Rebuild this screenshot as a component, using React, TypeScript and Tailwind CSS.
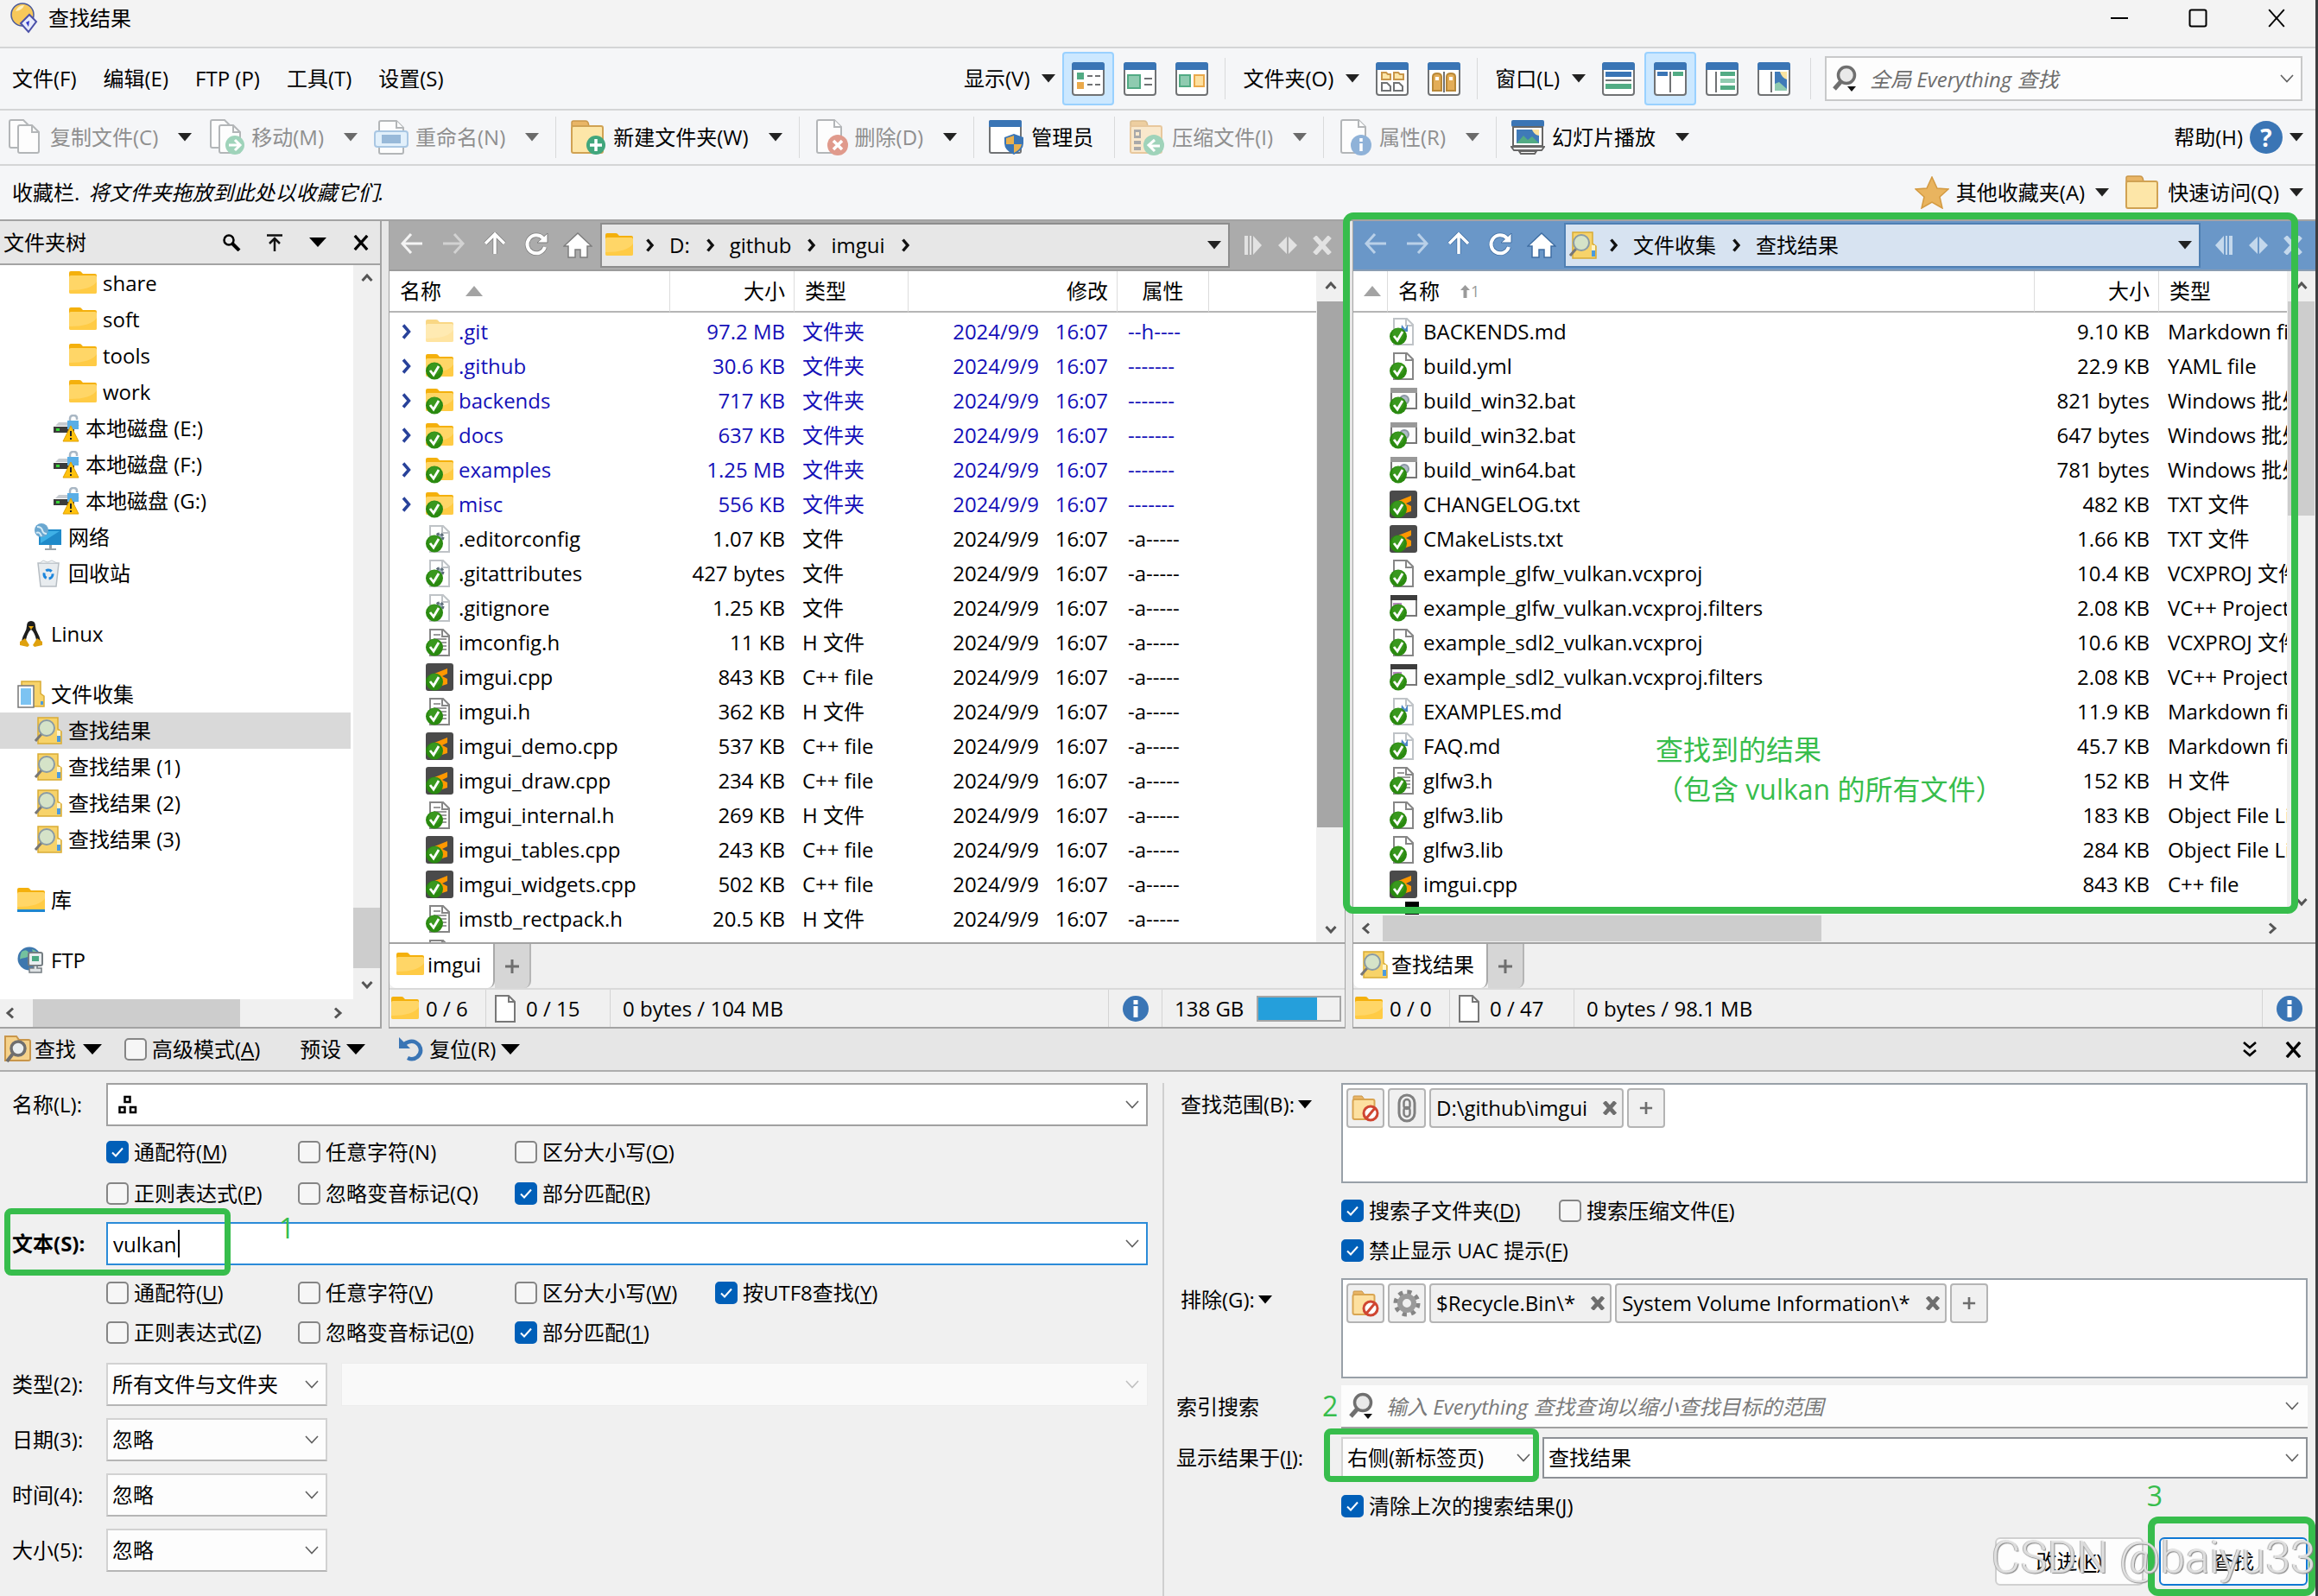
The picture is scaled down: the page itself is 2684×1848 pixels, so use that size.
import type { ReactNode } from 'react';

interface FileRow {
  icon: ReactNode;
  name: string;
  size: string;
  type: string;
  attr?: string;
  dir?: boolean;
}

/* ---------- text ---------- */

// "&X" marks an underlined mnemonic, as in Windows resource strings.
function Txt({ children }: { children: string }) {
  const at = children.indexOf('&');
  if (at < 0) return <span className="whitespace-pre">{children}</span>;
  return (
    <span className="whitespace-pre">
      {children.slice(0, at)}
      <span className="underline underline-offset-2">{children[at + 1]}</span>
      {children.slice(at + 2)}
    </span>
  );
}

/* ---------- small glyphs ---------- */

function Caret({ className = 'text-[#222]' }: { className?: string }) {
  return (
    <svg width="16" height="10" viewBox="0 0 16 10" className={`shrink-0 ${className}`}>
      <path d="M0 0h16L8 9.5z" fill="currentColor" />
    </svg>
  );
}

function BigCaret() {
  return (
    <svg width="22" height="14" viewBox="0 0 22 14" className="shrink-0">
      <path d="M0 1h22L11 13z" fill="#000" />
    </svg>
  );
}

function ThinChevron({ className = 'text-[#606060]' }: { className?: string }) {
  return (
    <svg width="16" height="10" viewBox="0 0 16 10" className={className}>
      <path d="M1 1l7 7.5L15 1" fill="none" stroke="currentColor" strokeWidth="1.6" />
    </svg>
  );
}

const ROTATE = { up: 0, right: 90, down: 180, left: 270 };

function ScrollArrow({ dir }: { dir: keyof typeof ROTATE }) {
  return (
    <svg width="14" height="14" viewBox="0 0 14 14" className="shrink-0">
      <g transform={`rotate(${ROTATE[dir]} 7 7)`}>
        <path d="M1.5 10L7 4l5.5 6" fill="none" stroke="#555" strokeWidth="3" />
      </g>
    </svg>
  );
}

function Cross({ size, stroke, className }: { size: number; stroke: number; className?: string }) {
  return (
    <svg width={size} height={size} viewBox="0 0 20 20" className={className}>
      <path d="M2 1l16 18M18 1L2 19" fill="none" stroke="currentColor" strokeWidth={stroke} />
    </svg>
  );
}

function CrumbArrow() {
  return (
    <svg width="12" height="16" viewBox="0 0 12 16">
      <path d="M2.5 1.5l5.5 6.5-5.5 6.5" fill="none" stroke="#111" strokeWidth="3.4" />
    </svg>
  );
}

function Plus({ size = 18 }: { size?: number }) {
  return (
    <svg width={size} height={size} viewBox="0 0 18 18">
      <path d="M9 1v16M1 9h16" stroke="#6e6e6e" strokeWidth="3" />
    </svg>
  );
}

/* ---------- toolbar icons ---------- */

function Frame({ children }: { children: ReactNode }) {
  return (
    <svg width="38" height="39" viewBox="0 0 38 39">
      <rect x="1" y="1" width="36" height="37" rx="3" fill="#fff" stroke="#707274" strokeWidth="2" />
      <path d="M0 9V3q0-3 3-3h32q3 0 3 3v6z" fill="#3a75b5" />
      {children}
    </svg>
  );
}

const sheet = (x: number, y: number, w = 24, h = 32) =>
  `M${x} ${y + 2}q0-2 2-2h${w - 10}l8 8v${h - 10}q0 2-2 2h${4 - w}q-2 0-2-2z`;
const fold = (x: number, y: number, w = 24) => `M${x + w - 8} ${y}v8h8`;

function CopyIcon({ move = false }: { move?: boolean }) {
  return (
    <svg width="42" height="42" viewBox="0 0 42 42" fill="#fdfdfd" stroke="#b3b6b8" strokeWidth="2">
      <path d={sheet(3, 1)} />
      <path d={sheet(13, 7)} />
      <path d={fold(13, 7)} fill="none" />
      {move && (
        <>
          <circle cx="31" cy="30" r="11" fill="#9fd3ba" stroke="none" />
          <path d="M24 30h12M31 24l6 6-6 6" fill="none" stroke="#fff" strokeWidth="3" />
        </>
      )}
    </svg>
  );
}

function RenameIcon() {
  return (
    <svg width="40" height="40" viewBox="0 0 40 40">
      <g fill="#fdfdfd" stroke="#b3b6b8" strokeWidth="2">
        <path d={sheet(6, 1, 28, 38)} />
        <path d={fold(6, 1, 28)} />
      </g>
      <rect x="1" y="13" width="38" height="18" rx="3" fill="#e2f0fb" stroke="#a9c7e3" strokeWidth="2" />
      <rect x="9" y="17" width="22" height="10" fill="#98b9d9" />
    </svg>
  );
}

function FlatFolder({ children }: { children?: ReactNode }) {
  return (
    <svg width="42" height="42" viewBox="0 0 42 42" className="shrink-0">
      <path d="M2 8V4q0-2 2-2h14q2 0 3 2l1 4z" fill="#e9b566" stroke="#c9964a" strokeWidth="1.5" />
      <rect x="2" y="8" width="36" height="31" rx="2" fill="#fde6a8" stroke="#d0a253" strokeWidth="2" />
      {children}
    </svg>
  );
}

function NewFolderIcon() {
  return (
    <FlatFolder>
      <circle cx="30" cy="30" r="11" fill="#41a67c" />
      <path d="M30 23v14M23 30h14" stroke="#fff" strokeWidth="3.5" />
    </FlatFolder>
  );
}

function DeleteIcon() {
  return (
    <svg width="40" height="42" viewBox="0 0 40 42">
      <g fill="#fdfdfd" stroke="#b3b6b8" strokeWidth="2">
        <path d={sheet(4, 1, 28, 38)} />
        <path d={fold(4, 1, 28)} />
      </g>
      <circle cx="28" cy="30" r="12" fill="#e09a8c" />
      <path d="M23 25l10 10M33 25L23 35" stroke="#fff" strokeWidth="3.5" />
    </svg>
  );
}

function AdminIcon() {
  return (
    <svg width="42" height="42" viewBox="0 0 42 42">
      <rect x="2" y="2" width="36" height="37" rx="2" fill="#fff" stroke="#707274" strokeWidth="2" />
      <path d="M1 9V3q0-2 2-2h34q2 0 2 2v6z" fill="#3a75b5" />
      <path d="M30 17l11 4v7q0 8-11 13-11-5-11-13v-7z" fill="#3a75b5" />
      <path d="M30 19v10H21v-7zM30 29h9q-1 6-9 10z" fill="#e9b04e" />
    </svg>
  );
}

function ArchiveIcon() {
  return (
    <svg width="42" height="42" viewBox="0 0 42 42">
      <g opacity="0.6">
        <path d="M2 8V4q0-2 2-2h14q2 0 3 2l1 4z" fill="#e9b566" stroke="#c9964a" strokeWidth="1.5" />
        <rect x="2" y="8" width="36" height="31" rx="2" fill="#fde0b0" stroke="#e0aa62" strokeWidth="2" />
        <path d="M6 12h8v10H6zM6 25h8v4H6zM6 32h8v4H6z" fill="#777" />
        <path d="M8 15h4v4H8z" fill="#fde0b0" />
      </g>
      <circle cx="29" cy="30" r="12" fill="#9fd3ba" />
      <path d="M36 31H24M30 24l-7 6 7 7" fill="none" stroke="#fff" strokeWidth="3" />
    </svg>
  );
}

function PropsIcon() {
  return (
    <svg width="40" height="42" viewBox="0 0 40 42">
      <g fill="#fdfdfd" stroke="#b3b6b8" strokeWidth="2">
        <path d={sheet(4, 1, 28, 38)} />
        <path d={fold(4, 1, 28)} />
      </g>
      <circle cx="27" cy="30" r="12" fill="#8fb2d8" />
      <path d="M27 22v4M27 28v9" stroke="#fff" strokeWidth="3.5" />
    </svg>
  );
}

function SlideIcon() {
  return (
    <svg width="40" height="42" viewBox="0 0 40 42">
      <rect x="1" y="1" width="38" height="8" rx="2" fill="#3a75b5" />
      <path d="M3 9h34v22H3z" fill="#fff" stroke="#666" strokeWidth="2" />
      <path d="M7 12h26v16H7z" fill="#3f7ab8" />
      <path d="M7 28l8-9 5 5 5-4 8 8z" fill="#52ab84" />
      <path d="M25 12h8v7q-6-1-8-7z" fill="#fbe3a0" />
      <path d="M1 32h38l-3 4H4zM10 37h20l-2 3H12z" fill="#fff" stroke="#666" strokeWidth="2" />
    </svg>
  );
}

function HelpIcon() {
  return (
    <span className="flex size-[38px] items-center justify-center rounded-full bg-[#3a75b5] text-[28px] font-bold text-white">
      ?
    </span>
  );
}

function SearchGlass({ size = 32 }: { size?: number }) {
  return (
    <svg width={size} height={size} viewBox="0 0 32 32" className="shrink-0">
      <circle cx="17" cy="12" r="9.5" fill="#e9e9e9" stroke="#6f6f6f" strokeWidth="3.5" />
      <path d="M11 19L3 28" stroke="#6f6f6f" strokeWidth="5" />
      <path d="M18 25h10l-5 6z" fill="#111" />
    </svg>
  );
}

/* ---------- file icons ---------- */

function FolderIcon({ badge = false, faded = false, library = false }: { badge?: boolean; faded?: boolean; library?: boolean }) {
  return (
    <svg width="32" height="32" viewBox="0 0 32 32" className="shrink-0">
      <g opacity={faded ? 0.5 : 1}>
        <path d="M0 12V4q0-2 2-2h10q2 0 3 2l1 1h14q2 0 2 2v5z" fill="#f4b00c" />
        <path d="M0 9q0-2 2-2h28q2 0 2 2v17q0 2-2 2H2q-2 0-2-2z" fill="#ffd667" />
        <path d="M0 26q0 2 2 2h28q2 0 2-2V14q-6 10-32 10z" fill="#ffcb45" />
      </g>
      {library && <path d="M0 27h32v3H0z" fill="#1f86cf" />}
      {badge && <Badge />}
    </svg>
  );
}

function Badge() {
  return (
    <g>
      <circle cx="10" cy="21.5" r="10" fill="#2a8a10" />
      <circle cx="10" cy="19" r="7" fill="#48a52c" opacity="0.5" />
      <path d="M5 21l4 5 6-10" fill="none" stroke="#fff" strokeWidth="2.8" />
    </g>
  );
}

type DocKind = 'plain' | 'text' | 'md' | 'gear' | 'bat' | 'filters' | 'code';

function DocIcon({ kind = 'plain' }: { kind?: DocKind }) {
  const page = kind === 'md' || kind === 'gear' ? '#bfc3c7' : '#868686';
  return (
    <svg width="32" height="32" viewBox="0 0 32 32" className="shrink-0">
      {kind === 'code' ? (
        <>
          <rect width="32" height="32" rx="3" fill="#4a4a4a" />
          <path d="M10 12l15-6v6l-6 3 6 3v6l-15 5v-5l8-4-8-4z" fill="#ff9800" />
        </>
      ) : kind === 'bat' || kind === 'filters' ? (
        <>
          <rect x="2" y="2" width="29" height="23" fill="#fcfcfc" stroke="#777" strokeWidth="2" />
          <path d="M1 1h31v6H1z" fill={kind === 'filters' ? '#3d3d3d' : '#999'} />
          {kind === 'bat' && <circle cx="17" cy="15" r="5" fill="#aebac6" stroke="#8a96a2" strokeWidth="2" />}
          {kind === 'filters' && <path d="M4 10h10v8H4z" fill="#b88ac0" />}
        </>
      ) : (
        <>
          <path d="M5 1h15l7 7v23H5z" fill="#fff" stroke={page} strokeWidth="2" />
          <path d="M19 1v8h8" fill="none" stroke={page} strokeWidth="2" />
          {kind === 'text' && <path d="M9 7h8M9 12h15M9 16h15M9 20h15M9 24h15" stroke="#9a9a9a" strokeWidth="2" />}
          {kind === 'md' && <path d="M14 8l4 5 3-5v8h-8z" fill="#4d86c4" />}
          {kind === 'gear' && <circle cx="16" cy="14" r="4" fill="#9fb0bd" stroke="#5c6c78" strokeWidth="3" strokeDasharray="3 2" />}
        </>
      )}
      <Badge />
    </svg>
  );
}

function SearchFolder() {
  return (
    <svg width="32" height="32" viewBox="0 0 32 32" className="shrink-0">
      <path d="M4 1h23v13l4 3v14H4z" fill="#f7d36a" stroke="#d9ac35" strokeWidth="1.5" />
      <path d="M26 22h4v7h-4z" fill="#4a9be0" />
      <path d="M26 16h4v6h-4z" fill="#fff3c8" />
      <path d="M8 20L1 28" stroke="#777" strokeWidth="3" />
      <circle cx="14" cy="13" r="9" fill="#cfe5d8" fillOpacity="0.85" stroke="#8a9ba5" strokeWidth="2" />
    </svg>
  );
}

function DriveIcon() {
  return (
    <svg width="32" height="32" viewBox="0 0 32 32" className="shrink-0">
      <path d="M4 13l4-4h20l4 4z" fill="#c7cbd0" />
      <path d="M2 14h24v7H2z" fill="#3b3b3b" />
      <path d="M5 16h4v3H5z" fill="#39d639" />
      <path d="M21 8V5q0-4 4-4t4 3v2" fill="none" stroke="#a9b7c4" strokeWidth="2.5" />
      <path d="M18 7h13v10H18z" fill="#5aaee6" />
      <path d="M22 13l9 18H13z" fill="#ffc20e" stroke="#e0a000" />
      <path d="M22 19v6M22 27v2" stroke="#222" strokeWidth="2" />
    </svg>
  );
}

function NetworkIcon() {
  return (
    <svg width="32" height="32" viewBox="0 0 32 32" className="shrink-0">
      <path d="M5 7h26v18H5z" fill="#1f8ac9" />
      <path d="M7 9h22L7 23z" fill="#3fb0e6" />
      <path d="M17 25h3v4h5v2H12v-2h5z" fill="#9aa4ab" />
      <circle cx="8" cy="8" r="8" fill="#6aa7d0" />
      <path d="M3 4q5 0 6 4t5 4M2 11q4-2 6 4" fill="none" stroke="#d6ebf5" strokeWidth="2" />
    </svg>
  );
}

function BinIcon() {
  return (
    <svg width="32" height="32" viewBox="0 0 32 32" className="shrink-0">
      <path d="M4 4h24l-3 27H7z" fill="#e8ecef" stroke="#b6bdc3" strokeWidth="1.5" />
      <path d="M6 4l4-3 5 2 5-2 6 3z" fill="#f6f8fa" stroke="#c2c8cd" />
      <circle cx="16" cy="17" r="5" fill="none" stroke="#1c86dd" strokeWidth="3" strokeDasharray="7 3" />
    </svg>
  );
}

function TuxIcon() {
  return (
    <svg width="32" height="32" viewBox="0 0 32 32" className="shrink-0">
      <path d="M11 7q0-6 5-6t5 6q0 4 3 9 4 7 2 12H6q-2-5 2-12 3-5 3-9z" fill="#1d1d1d" />
      <path d="M16 11q3 2 5 8t0 10H11q-2-4 0-10t5-8z" fill="#fff" />
      <path d="M13 7h6l-3 4z" fill="#e8a90c" />
      <path d="M3 25l6-4 5 8-2 2-9-2zM29 25l-6-4-5 8 2 2 9-2z" fill="#dfa10e" />
    </svg>
  );
}

function CollectionIcon() {
  return (
    <svg width="32" height="32" viewBox="0 0 32 32" className="shrink-0">
      <path d="M5 1h22v14l4 3v12H5z" fill="#f7d36a" stroke="#d9ac35" strokeWidth="1.5" />
      <path d="M27 24h3v4h-3z" fill="#4a9be0" />
      <path d="M1 6h18v25H1z" fill="#fff" stroke="#777" strokeWidth="1.5" />
      <path d="M4 9h12v19H4z" fill="#7cc3f2" />
    </svg>
  );
}

function FtpIcon() {
  return (
    <svg width="32" height="32" viewBox="0 0 32 32" className="shrink-0">
      <circle cx="14" cy="14" r="13.5" fill="#3d77ae" />
      <path d="M5 6q6-4 8 1t-4 6-6 2q0-5 2-9zM17 3q6 2 8 6l-6 1z" fill="#74c29e" />
      <rect x="13" y="7" width="16" height="15" rx="2" fill="#e9eef0" stroke="#757d82" strokeWidth="2" />
      <path d="M17 11h8v6h-8z" fill="#4aa883" />
      <path d="M19 22h4v3h5v5H14v-5h5z" fill="#dfe3e5" stroke="#757d82" strokeWidth="1.5" />
    </svg>
  );
}

function InfoIcon() {
  return (
    <svg width="30" height="30" viewBox="0 0 30 30" className="shrink-0">
      <circle cx="15" cy="15" r="15" fill="#3a75b5" />
      <path d="M15 5v5M15 12v13" stroke="#fff" strokeWidth="5" />
    </svg>
  );
}

function BlankPage() {
  return (
    <svg width="24" height="32" viewBox="0 0 24 32" className="shrink-0">
      <path d="M1 1h15l7 7v23H1z" fill="#fff" stroke="#777" strokeWidth="2" />
      <path d="M16 1v7h7" fill="none" stroke="#777" strokeWidth="2" />
    </svg>
  );
}

function BlockedFolder() {
  return (
    <svg width="32" height="32" viewBox="0 0 32 32">
      <path d="M2 6V3q0-1 1-1h9l3 4z" fill="#e9b566" stroke="#c9964a" />
      <rect x="1.5" y="6" width="25" height="23" rx="2" fill="#fde0a0" stroke="#d9a552" strokeWidth="2" />
      <circle cx="22" cy="22" r="8" fill="#fff" stroke="#cf4632" strokeWidth="3" />
      <path d="M27 16L17 28" stroke="#cf4632" strokeWidth="3" />
    </svg>
  );
}

/* ---------- top bars ---------- */

function ToolItem({ icon, text, off, caret = true, darkCaret, last }: { icon: ReactNode; text: string; off?: boolean; caret?: boolean; darkCaret?: boolean; last?: boolean }) {
  return (
    <>
      <button type="button" className={`flex items-center gap-2 ${off ? 'text-[#8f8f8f]' : 'text-black'}`}>
        {icon}
        <Txt>{text}</Txt>
      </button>
      {caret && (
        <button type="button" aria-label={`${text} 菜单`} className="ml-1 flex h-12 w-[54px] items-center justify-center">
          <Caret className={off && !darkCaret ? 'text-[#6a6a6a]' : 'text-[#222]'} />
        </button>
      )}
      {last && <span className="mr-4 h-12 w-px bg-[#d9dadb]" />}
    </>
  );
}

function ViewButton({ active, label, children }: { active?: boolean; label: string; children: ReactNode }) {
  return (
    <button
      type="button"
      aria-label={label}
      className={`flex h-[62px] w-[60px] items-center justify-center rounded border-2 ${
        active ? 'border-[#99d1ff] bg-[#cce8ff]' : 'border-transparent'
      }`}
    >
      <Frame>{children}</Frame>
    </button>
  );
}

function MenuDrop({ text }: { text: string }) {
  return (
    <button type="button" className="mr-2 flex items-center gap-[14px]">
      <Txt>{text}</Txt>
      <Caret />
    </button>
  );
}

function TitleBar() {
  return (
    <header className="flex h-14 shrink-0 items-center border-b-2 border-[#d4d5d6] bg-[#f3f3f3] pb-3 pl-3">
      <svg width="32" height="36" viewBox="0 0 32 36">
        <circle cx="14" cy="14" r="13" fill="#f7c85a" stroke="#4a5a9a" strokeWidth="1.5" />
        <path d="M6 10q3-7 10-7-2 6-10 7z" fill="#fdf0c0" />
        <path d="M22 14l8 8-9 12-9-10z" fill="#e8ebfa" stroke="#4a50a8" strokeWidth="2" />
        <path d="M18 23l4-2-1 7z" fill="#3038c8" />
      </svg>
      <h1 className="ml-3">
        <Txt>查找结果</Txt>
      </h1>
      <div className="ml-auto flex items-center">
        <button type="button" aria-label="最小化" className="flex h-10 w-[91px] items-center justify-center">
          <svg width="20" height="20" viewBox="0 0 20 20">
            <path d="M0 10h20" stroke="#000" strokeWidth="2" />
          </svg>
        </button>
        <button type="button" aria-label="最大化" className="flex h-10 w-[91px] items-center justify-center">
          <svg width="22" height="22" viewBox="0 0 22 22">
            <rect x="1.5" y="1.5" width="19" height="19" rx="2" fill="none" stroke="#000" strokeWidth="2" />
          </svg>
        </button>
        <button type="button" aria-label="关闭" className="flex h-10 w-[91px] items-center justify-center">
          <Cross size={22} stroke={1.7} />
        </button>
      </div>
    </header>
  );
}

function MenuBar() {
  return (
    <div className="flex h-[72px] shrink-0 items-center border-b-2 border-[#d4d5d6] pl-[14px] pr-[15px]">
      <nav className="flex gap-[31px]">
        {['文件(F)', '编辑(E)', 'FTP (P)', '工具(T)', '设置(S)'].map((m) => (
          <button key={m} type="button">
            <Txt>{m}</Txt>
          </button>
        ))}
      </nav>
      <div className="ml-auto flex items-center">
        <MenuDrop text="显示(V)" />
        <ViewButton active label="详细信息">
          <path d="M6 12h8v8H6z" fill="#52ab84" />
          <path d="M6 23h8v8H6z" fill="#eaa94b" />
          <path d="M18 16h6M27 16h6M18 26h6M27 26h6" stroke="#707274" strokeWidth="2" />
        </ViewButton>
        <ViewButton label="平铺">
          <path d="M5 15h14v15H5z" fill="#8fcbb0" stroke="#52ab84" strokeWidth="2" />
          <path d="M24 19h9M24 26h9" stroke="#707274" strokeWidth="2" />
        </ViewButton>
        <ViewButton label="缩略图">
          <path d="M5 15h12v13H5z" fill="#8fcbb0" stroke="#52ab84" strokeWidth="2" />
          <path d="M22 15h11v13H22z" fill="#fde0a0" stroke="#eaa94b" strokeWidth="2" />
        </ViewButton>
        <span className="ml-2 mr-5 h-12 w-px bg-[#d9dadb]" />
        <MenuDrop text="文件夹(O)" />
        <ViewButton label="混合">
          <path d="M7 12h5l2 2h3v6H7zM21 12h5l2 2h4v6H21z" fill="#fde6a8" stroke="#c9964a" strokeWidth="2" />
          <path d="M7 24h6l4 4v5H7zM21 24h6l4 4v5H21z" fill="#fff" stroke="#707274" strokeWidth="2" />
        </ViewButton>
        <ViewButton label="分组">
          <path d="M6 33V17q0-4 5-4t5 4v16zM22 33V17q0-4 5-4t5 4v16z" fill="#e3ad58" stroke="#b98838" strokeWidth="2" />
          <path d="M9 17h4v4H9zM25 17h4v4h-4z" fill="#fff" />
          <path d="M19 11v24" stroke="#707274" strokeWidth="2" />
        </ViewButton>
        <span className="ml-2 mr-5 h-12 w-px bg-[#d9dadb]" />
        <MenuDrop text="窗口(L)" />
        <ViewButton label="上下分栏">
          <path d="M4 11h30v6H4z" fill="#3a75b5" />
          <path d="M4 21h30" stroke="#707274" strokeWidth="2" />
          <path d="M4 25h30v6H4z" fill="#52ab84" />
        </ViewButton>
        <ViewButton active label="左右分栏">
          <path d="M4 11h12v5H4z" fill="#3a75b5" />
          <path d="M22 11h12v5H22z" fill="#52ab84" />
          <path d="M19 11v24" stroke="#707274" strokeWidth="2" />
        </ViewButton>
        <ViewButton label="文件夹树">
          <path d="M12 11v24" stroke="#707274" strokeWidth="2" />
          <path d="M17 11h17v5H17zM17 27h17v5H17z" fill="#52ab84" />
          <path d="M17 19h17v5H17z" fill="#8fcbb0" />
        </ViewButton>
        <ViewButton label="预览">
          <path d="M16 11v24" stroke="#707274" strokeWidth="2" />
          <path d="M20 11h14v22H20z" fill="#3f7ab8" />
          <path d="M26 11h8v9q-6-2-8-9z" fill="#fbe3a0" />
          <path d="M20 25l5-2 9 8v2H20z" fill="#8fcbb0" />
        </ViewButton>
        <span className="ml-3 mr-4 h-12 w-px bg-[#d9dadb]" />
        <div className="flex h-[52px] w-[553px] items-center border-2 border-[#c8c9ca] bg-[#fdfdfd] pl-[6px]">
          <SearchGlass />
          <input
            type="text"
            aria-label="全局 Everything 查找"
            placeholder="全局 Everything 查找"
            className="ml-3 h-full flex-1 bg-transparent outline-none placeholder:italic placeholder:text-[#6d6d6d]"
          />
          <span className="mr-2">
            <ThinChevron />
          </span>
        </div>
      </div>
    </div>
  );
}

function ToolBar() {
  return (
    <div className="flex h-16 shrink-0 items-center border-b-2 border-[#d4d5d6] pl-2 pr-[14px]">
      <ToolItem icon={<CopyIcon />} text="复制文件(C)" off darkCaret />
      <ToolItem icon={<CopyIcon move />} text="移动(M)" off />
      <ToolItem icon={<RenameIcon />} text="重命名(N)" off last />
      <ToolItem icon={<NewFolderIcon />} text="新建文件夹(W)" last />
      <ToolItem icon={<DeleteIcon />} text="删除(D)" off darkCaret last />
      <ToolItem icon={<AdminIcon />} text="管理员" caret={false} />
      <span className="ml-6 mr-4 h-12 w-px bg-[#d9dadb]" />
      <ToolItem icon={<ArchiveIcon />} text="压缩文件(I)" off last />
      <ToolItem icon={<PropsIcon />} text="属性(R)" off last />
      <ToolItem icon={<SlideIcon />} text="幻灯片播放" />
      <button type="button" className="ml-auto flex items-center gap-2">
        <Txt>帮助(H)</Txt>
        <HelpIcon />
        <Caret />
      </button>
    </div>
  );
}

function FavoritesBar() {
  return (
    <div className="flex h-16 shrink-0 items-center border-b-2 border-[#a3a3a3] pl-[14px] pr-[14px]">
      <Txt>收藏栏. </Txt>
      <em className="ml-1">
        <Txt>将文件夹拖放到此处以收藏它们.</Txt>
      </em>
      <button type="button" className="ml-auto flex items-center gap-2">
        <svg width="40" height="38" viewBox="0 0 40 38">
          <path d="M20 1l6 13 13 1-10 9 3 13-12-7-12 7 3-13L1 15l13-1z" fill="#e9b45f" stroke="#d39a42" strokeWidth="1.5" />
        </svg>
        <Txt>其他收藏夹(A)</Txt>
        <span className="ml-1">
          <Caret />
        </span>
      </button>
      <button type="button" className="ml-[18px] flex items-center gap-2">
        <FlatFolder />
        <Txt>快速访问(Q)</Txt>
        <span className="ml-1">
          <Caret />
        </span>
      </button>
    </div>
  );
}

/* ---------- folder tree ---------- */

const INDENT = ['pl-5', 'pl-10', 'pl-[60px]', 'pl-20'];

interface TreeItem {
  label: string;
  icon: ReactNode;
  depth: number;
  gap?: boolean;
  selected?: boolean;
}

const TREE: TreeItem[] = [
  { label: 'share', icon: <FolderIcon />, depth: 3 },
  { label: 'soft', icon: <FolderIcon />, depth: 3 },
  { label: 'tools', icon: <FolderIcon />, depth: 3 },
  { label: 'work', icon: <FolderIcon />, depth: 3 },
  { label: '本地磁盘 (E:)', icon: <DriveIcon />, depth: 2 },
  { label: '本地磁盘 (F:)', icon: <DriveIcon />, depth: 2 },
  { label: '本地磁盘 (G:)', icon: <DriveIcon />, depth: 2 },
  { label: '网络', icon: <NetworkIcon />, depth: 1 },
  { label: '回收站', icon: <BinIcon />, depth: 1 },
  { label: 'Linux', icon: <TuxIcon />, depth: 0, gap: true },
  { label: '文件收集', icon: <CollectionIcon />, depth: 0, gap: true },
  { label: '查找结果', icon: <SearchFolder />, depth: 1, selected: true },
  { label: '查找结果 (1)', icon: <SearchFolder />, depth: 1 },
  { label: '查找结果 (2)', icon: <SearchFolder />, depth: 1 },
  { label: '查找结果 (3)', icon: <SearchFolder />, depth: 1 },
  { label: '库', icon: <FolderIcon library />, depth: 0, gap: true },
  { label: 'FTP', icon: <FtpIcon />, depth: 0, gap: true },
];

function FolderTree() {
  return (
    <aside className="flex min-h-0 flex-col border-b-2 border-r-2 border-[#a3a3a3] bg-white">
      <div className="flex h-[51px] shrink-0 items-center border-b-2 border-[#a3a3a3] bg-[#e7e7e7] pl-1 pr-[2px]">
        <Txt>文件夹树</Txt>
        <div className="ml-auto flex gap-[10px]">
          <button type="button" aria-label="查找" className="flex w-10 justify-center">
            <svg width="22" height="20" viewBox="0 0 22 20">
              <circle cx="8" cy="7" r="5.5" fill="none" stroke="#000" strokeWidth="2.5" />
              <path d="M12 11l8 8" stroke="#000" strokeWidth="4" />
            </svg>
          </button>
          <button type="button" aria-label="向上" className="flex w-10 justify-center">
            <svg width="20" height="20" viewBox="0 0 20 20">
              <path d="M1 1.5h18M10 20V6M4 11l6-6 6 6" fill="none" stroke="#111" strokeWidth="2.5" />
            </svg>
          </button>
          <button type="button" aria-label="菜单" className="flex w-10 items-center justify-center">
            <svg width="20" height="12" viewBox="0 0 20 12">
              <path d="M0 0h20L10 11z" />
            </svg>
          </button>
          <button type="button" aria-label="关闭文件夹树" className="flex w-10 items-center justify-center">
            <Cross size={18} stroke={3.6} />
          </button>
        </div>
      </div>
      <div className="flex min-h-0 flex-1">
        <ul className="min-w-0 flex-1 overflow-hidden pr-[3px]">
          {TREE.map((t) => (
            <li
              key={t.label}
              className={`flex h-[42px] items-center gap-[7px] ${INDENT[t.depth]} ${t.gap ? 'mt-7' : ''} ${
                t.selected ? 'bg-[#d9d9d9]' : ''
              }`}
            >
              {t.icon}
              <Txt>{t.label}</Txt>
            </li>
          ))}
        </ul>
        <div className="flex w-[31px] flex-col items-center bg-[#f0f0f0] pb-[10px] pt-2">
          <ScrollArrow dir="up" />
          <span className="mb-3 mt-auto h-[70px] w-full bg-[#cdcdcd]" />
          <ScrollArrow dir="down" />
        </div>
      </div>
      <div className="flex h-8 shrink-0 items-center bg-[#f0f0f0] pl-[5px] pr-[42px]">
        <ScrollArrow dir="left" />
        <span className="ml-[19px] h-full w-60 bg-[#cdcdcd]" />
        <span className="ml-auto flex">
          <ScrollArrow dir="right" />
        </span>
      </div>
    </aside>
  );
}

/* ---------- listers ---------- */

function NavArrows({ active }: { active: boolean }) {
  const dim = active ? 'text-[#b9d0e8]' : 'text-[#d2d2d2]';
  const edge = active ? '#3f6ea3' : '#7d7d7d';
  return (
    <div className="flex">
      <button type="button" aria-label="后退" className={`flex w-12 justify-center ${active ? dim : 'text-[#f4f4f4]'}`}>
        <svg width="26" height="26" viewBox="0 0 26 26">
          <path d="M25 13H3M12 2L2 13l10 11" fill="none" stroke="currentColor" strokeWidth="3" />
        </svg>
      </button>
      <button type="button" aria-label="前进" className={`flex w-12 justify-center ${dim}`}>
        <svg width="26" height="26" viewBox="0 0 26 26">
          <path d="M1 13h22M14 2l10 11-10 11" fill="none" stroke="currentColor" strokeWidth="3" />
        </svg>
      </button>
      <button type="button" aria-label="向上" className="flex w-12 justify-center">
        <svg width="26" height="26" viewBox="0 0 26 26">
          <path d="M13 25V3M2 13L13 2l11 11" fill="none" stroke={edge} strokeWidth="5" />
          <path d="M13 25V3M2 13L13 2l11 11" fill="none" stroke="#fff" strokeWidth="3.5" />
        </svg>
      </button>
      <button type="button" aria-label="刷新" className="flex w-12 justify-center">
        <svg width="28" height="28" viewBox="0 0 28 28">
          <path d="M22 7a10.5 10.5 0 1 0 2 10" fill="none" stroke={edge} strokeWidth="5.5" />
          <path d="M27 1v11H15z" fill="#fff" stroke={edge} />
          <path d="M22 7a10.5 10.5 0 1 0 2 10" fill="none" stroke="#fff" strokeWidth="4" />
        </svg>
      </button>
      <button type="button" aria-label="主页" className="flex w-12 justify-center">
        <svg width="34" height="30" viewBox="0 0 34 30">
          <path d="M17 1l16 15h-5v13h-8v-9h-6v9H6V16H1z" fill="#fff" stroke={edge} strokeWidth="1.5" />
        </svg>
      </button>
    </div>
  );
}

function NavBar({ active, icon, crumbs, trailing }: { active: boolean; icon: ReactNode; crumbs: string[]; trailing?: boolean }) {
  return (
    <div
      className={`flex h-[58px] shrink-0 items-center border-b-2 pl-[2px] ${
        active ? 'border-[#8a9db3] bg-[#6a97c8]' : 'border-[#9c9c9c] bg-[#ababab]'
      }`}
    >
      <NavArrows active={active} />
      <div
        className={`ml-[2px] flex h-[52px] flex-1 items-center border-2 pl-1 pr-2 ${
          active ? 'border-[#4f7fb3] bg-[#d7e3f1]' : 'border-[#8d8d8d] bg-[#e7e7e7]'
        }`}
      >
        {icon}
        <span className="ml-[14px]">
          <CrumbArrow />
        </span>
        {crumbs.map((c, i) => (
          <span key={c} className="flex items-center">
            <button type="button" className="ml-4 mr-[18px]">
              <Txt>{c}</Txt>
            </button>
            {(trailing || i < crumbs.length - 1) && <CrumbArrow />}
          </span>
        ))}
        <button type="button" aria-label="路径历史" className="ml-auto">
          <Caret />
        </button>
      </div>
      <div className={`flex w-[133px] items-center gap-[18px] pl-4 ${active ? 'text-[#c4d8ec]' : 'text-[#e2e2e2]'}`}>
        <svg width="22" height="22" viewBox="0 0 22 22" fill="currentColor">
          {active ? (
            <path d="M11 0v22L1 11zM13 0h2v22h-2zM17 0h4v22h-4z" />
          ) : (
            <path d="M1 0h4v22H1zM7 0h2v22H7zM11 0v22l10-11z" />
          )}
        </svg>
        <svg width="22" height="22" viewBox="0 0 22 22" fill="currentColor">
          <path d="M10 1v20L0 11zM12 1v20l10-10z" />
        </svg>
        <Cross size={22} stroke={5} />
      </div>
    </div>
  );
}

function VScroll({ thumb, tone }: { thumb: string; tone: string }) {
  return (
    <div className="flex w-[33px] shrink-0 flex-col items-center bg-[#f0f0f0] pb-2 pt-[10px]">
      <ScrollArrow dir="up" />
      <span className={`mt-[11px] w-[31px] ${thumb} ${tone}`} />
      <span className="mt-auto flex">
        <ScrollArrow dir="down" />
      </span>
    </div>
  );
}

const dir = (name: string, size: string, attr = '-------'): FileRow => ({
  icon: <FolderIcon badge={name !== '.git'} faded={name === '.git'} />,
  name,
  size,
  type: '文件夹',
  attr,
  dir: true,
});
const file = (name: string, size: string, kind: DocKind, type: string): FileRow => ({
  icon: <DocIcon kind={kind} />,
  name,
  size,
  type,
  attr: '-a-----',
});

const LEFT: FileRow[] = [
  dir('.git', '97.2 MB', '--h----'),
  dir('.github', '30.6 KB'),
  dir('backends', '717 KB'),
  dir('docs', '637 KB'),
  dir('examples', '1.25 MB'),
  dir('misc', '556 KB'),
  file('.editorconfig', '1.07 KB', 'gear', '文件'),
  file('.gitattributes', '427 bytes', 'gear', '文件'),
  file('.gitignore', '1.25 KB', 'gear', '文件'),
  file('imconfig.h', '11 KB', 'text', 'H 文件'),
  file('imgui.cpp', '843 KB', 'code', 'C++ file'),
  file('imgui.h', '362 KB', 'text', 'H 文件'),
  file('imgui_demo.cpp', '537 KB', 'code', 'C++ file'),
  file('imgui_draw.cpp', '234 KB', 'code', 'C++ file'),
  file('imgui_internal.h', '269 KB', 'text', 'H 文件'),
  file('imgui_tables.cpp', '243 KB', 'code', 'C++ file'),
  file('imgui_widgets.cpp', '502 KB', 'code', 'C++ file'),
  file('imstb_rectpack.h', '20.5 KB', 'text', 'H 文件'),
];

const RIGHT: FileRow[] = [
  file('BACKENDS.md', '9.10 KB', 'md', 'Markdown file'),
  file('build.yml', '22.9 KB', 'plain', 'YAML file'),
  file('build_win32.bat', '821 bytes', 'bat', 'Windows 批处理'),
  file('build_win32.bat', '647 bytes', 'bat', 'Windows 批处理'),
  file('build_win64.bat', '781 bytes', 'bat', 'Windows 批处理'),
  file('CHANGELOG.txt', '482 KB', 'code', 'TXT 文件'),
  file('CMakeLists.txt', '1.66 KB', 'code', 'TXT 文件'),
  file('example_glfw_vulkan.vcxproj', '10.4 KB', 'plain', 'VCXPROJ 文件'),
  file('example_glfw_vulkan.vcxproj.filters', '2.08 KB', 'filters', 'VC++ Project'),
  file('example_sdl2_vulkan.vcxproj', '10.6 KB', 'plain', 'VCXPROJ 文件'),
  file('example_sdl2_vulkan.vcxproj.filters', '2.08 KB', 'filters', 'VC++ Project'),
  file('EXAMPLES.md', '11.9 KB', 'md', 'Markdown file'),
  file('FAQ.md', '45.7 KB', 'md', 'Markdown file'),
  file('glfw3.h', '152 KB', 'text', 'H 文件'),
  file('glfw3.lib', '183 KB', 'plain', 'Object File Library'),
  file('glfw3.lib', '284 KB', 'plain', 'Object File Library'),
  file('imgui.cpp', '843 KB', 'code', 'C++ file'),
];

const SortMark = () => (
  <svg width="20" height="12" viewBox="0 0 20 12">
    <path d="M0 12L10 0l10 12z" fill="#a3a3a3" />
  </svg>
);

const TH = 'border-r border-[#dcdcdc] font-normal';

function LeftTable() {
  return (
    <table className="w-full table-fixed border-separate border-spacing-0">
      <colgroup>
        <col className="w-[325px]" />
        <col className="w-36" />
        <col className="w-[132px]" />
        <col className="w-[242px]" />
        <col className="w-[106px]" />
        <col />
      </colgroup>
      <thead>
        <tr className="h-12 [&>th]:border-b-2 [&>th]:border-b-[#b5b5b5]">
          <th className={`${TH} pl-3 text-left`}>
            <span className="flex items-center gap-7">
              <Txt>名称</Txt>
              <SortMark />
            </span>
          </th>
          <th className={`${TH} pr-[10px] text-right`}>
            <Txt>大小</Txt>
          </th>
          <th className={`${TH} pl-3 text-left`}>
            <Txt>类型</Txt>
          </th>
          <th className={`${TH} pr-[10px] text-right`}>
            <Txt>修改</Txt>
          </th>
          <th className={TH}>
            <Txt>属性</Txt>
          </th>
          <th />
        </tr>
      </thead>
      <tbody className="before:block before:h-[2px] before:content-['']">
        {LEFT.map((r) => (
          <tr key={r.name} className={`h-10 ${r.dir ? 'text-[#1410b8]' : ''}`}>
            <td className="p-0 pl-[14px]">
              <span className="flex items-center">
                <span className="w-7">
                  {r.dir && (
                    <svg width="12" height="18" viewBox="0 0 12 18">
                      <path d="M2 1.5L8.5 9 2 16.5" fill="none" stroke="#28429a" strokeWidth="3.5" />
                    </svg>
                  )}
                </span>
                {r.icon}
                <span className="ml-[6px]">
                  <Txt>{r.name}</Txt>
                </span>
              </span>
            </td>
            <td className="p-0 pr-[11px] text-right">{r.size}</td>
            <td className="p-0 pl-[9px]">
              <Txt>{r.type}</Txt>
            </td>
            <td className="p-0 pr-[11px] text-right">
              <Txt>{'2024/9/9   16:07'}</Txt>
            </td>
            <td className="p-0 pl-3">{r.attr}</td>
            <td />
          </tr>
        ))}
        <tr className="h-10">
          <td className="p-0 pl-[42px]">
            <DocIcon kind="text" />
          </td>
        </tr>
      </tbody>
    </table>
  );
}

function RightTable() {
  return (
    <table className="w-full table-fixed border-separate border-spacing-0">
      <colgroup>
        <col className="w-10" />
        <col />
        <col className="w-36" />
        <col className="w-[148px]" />
      </colgroup>
      <thead>
        <tr className="h-12 [&>th]:border-b-2 [&>th]:border-b-[#b5b5b5]">
          <th className={`${TH} p-0 pl-3`}>
            <SortMark />
          </th>
          <th className={`${TH} pl-3 text-left`}>
            <span className="flex items-center gap-6">
              <Txt>名称</Txt>
              <span className="flex items-center gap-px text-lg text-[#9a9a9a]">
                <svg width="11" height="15" viewBox="0 0 11 15">
                  <path d="M5.5 0L11 6H7.5v9h-4V6H0z" fill="#9a9a9a" />
                </svg>
                1
              </span>
            </span>
          </th>
          <th className={`${TH} pr-[10px] text-right`}>
            <Txt>大小</Txt>
          </th>
          <th className="pl-3 text-left font-normal">
            <Txt>类型</Txt>
          </th>
        </tr>
      </thead>
      <tbody className="before:block before:h-[2px] before:content-['']">
        {RIGHT.map((r, i) => (
          <tr key={i} className="h-10">
            <td colSpan={2} className="p-0 pl-[42px]">
              <span className="flex items-center gap-[7px]">
                {r.icon}
                <Txt>{r.name}</Txt>
              </span>
            </td>
            <td className="p-0 pr-[11px] text-right">{r.size}</td>
            <td className="overflow-hidden p-0 pl-[10px]">
              <Txt>{r.type}</Txt>
            </td>
          </tr>
        ))}
        <tr className="h-10">
          <td colSpan={2} className="p-0 pl-[60px] align-top">
            <span className="block size-4 bg-black" />
          </td>
        </tr>
      </tbody>
    </table>
  );
}

function TabBar({ icon, label }: { icon: ReactNode; label: string }) {
  return (
    <div className="flex h-[53px] shrink-0 border-t-2 border-[#a3a3a3] bg-[#f0f0f0]">
      <button type="button" className="z-10 flex items-center gap-1 rounded-b-lg border-r-2 border-[#a9a9a9] bg-white pb-1 pl-2 pr-[14px]">
        {icon}
        <Txt>{label}</Txt>
      </button>
      <button type="button" aria-label="新标签页" className="flex w-[42px] items-center justify-center rounded-br-lg border-r-2 border-[#b5b5b5] bg-[#d6d6d6]">
        <Plus />
      </button>
    </div>
  );
}

function StatusBar({ folders, files, bytes, children }: { folders: string; files: string; bytes: string; children?: ReactNode }) {
  return (
    <div className="flex h-[47px] shrink-0 items-stretch border-b-2 border-t-2 border-b-[#a3a3a3] border-t-[#d9d9d9] bg-[#f0f0f0]">
      <span className="flex w-28 items-center gap-2 border-r border-[#d4d4d4] pl-[2px]">
        <FolderIcon />
        {folders}
      </span>
      <span className="flex w-36 items-center gap-3 border-r border-[#d4d4d4] pl-[10px]">
        <BlankPage />
        {files}
      </span>
      <span className="flex flex-1 items-center pl-[14px]">{bytes}</span>
      <button type="button" aria-label="信息" className="flex w-[62px] items-center justify-center border-l border-[#d4d4d4]">
        <InfoIcon />
      </button>
      {children}
    </div>
  );
}

function LeftLister() {
  return (
    <section className="flex min-h-0 min-w-0 flex-col border-x border-[#a3a3a3] bg-white">
      <NavBar active={false} icon={<FolderIcon />} crumbs={['D:', 'github', 'imgui']} trailing />
      <div className="flex min-h-0 flex-1">
        <div className="min-w-0 flex-1 overflow-hidden">
          <LeftTable />
        </div>
        <VScroll thumb="h-[609px]" tone="bg-[#a6a6a6]" />
      </div>
      <TabBar icon={<FolderIcon />} label="imgui" />
      <StatusBar folders="0 / 6" files="0 / 15" bytes="0 bytes / 104 MB">
        <span className="flex w-[212px] items-center justify-between border-l border-[#d4d4d4] pl-[14px] pr-1">
          138 GB
          <span className="h-[30px] w-[98px] border-2 border-[#a5a5a5]">
            <span className="block h-full w-[72%] bg-[#259fdb]" />
          </span>
        </span>
      </StatusBar>
    </section>
  );
}

function RightLister() {
  return (
    <section className="relative flex min-h-0 min-w-0 flex-col border-l border-[#a3a3a3] bg-white">
      <NavBar active icon={<SearchFolder />} crumbs={['文件收集', '查找结果']} />
      <div className="flex min-h-0 flex-1">
        <div className="min-w-0 flex-1 overflow-hidden">
          <RightTable />
        </div>
        <VScroll thumb="h-[248px]" tone="bg-[#cdcdcd]" />
      </div>
      <div className="flex h-8 shrink-0 items-center bg-[#f0f0f0] pl-2 pr-[43px]">
        <ScrollArrow dir="left" />
        <span className="ml-3 h-[30px] w-[508px] bg-[#cdcdcd]" />
        <span className="ml-auto flex">
          <ScrollArrow dir="right" />
        </span>
      </div>
      <TabBar icon={<SearchFolder />} label="查找结果" />
      <StatusBar folders="0 / 0" files="0 / 47" bytes="0 bytes / 98.1 MB" />
      {/* annotation frame around the result list */}
      <div className="pointer-events-none absolute -left-3 -top-[10px] bottom-[133px] right-5 rounded-xl border-8 border-[#37bd4c]" />
      <p className="pointer-events-none absolute left-[350px] top-[589px] text-[32px] leading-[46px] text-[#37bd4c]">
        查找到的结果
        <br />
        （包含 vulkan 的所有文件）
      </p>
    </section>
  );
}

/* ---------- find panel ---------- */

function Check({ label, checked = false }: { label: string; checked?: boolean }) {
  return (
    <label className="flex items-center gap-[6px]">
      <span className="grid">
        <input
          type="checkbox"
          defaultChecked={checked}
          className="peer col-start-1 row-start-1 size-[26px] appearance-none rounded-[5px] border-2 border-[#858585] bg-[#f6f6f6] checked:border-[#005fb8] checked:bg-[#005fb8]"
        />
        <svg viewBox="0 0 26 26" className="pointer-events-none invisible col-start-1 row-start-1 size-[26px] peer-checked:visible">
          <path d="M7 13.5l4 4 8-9" fill="none" stroke="#fff" strokeWidth="2" />
        </svg>
      </span>
      <Txt>{label}</Txt>
    </label>
  );
}

function Select({ id, value, look }: { id: string; value: string; look: string }) {
  return (
    <span className={`relative flex items-center border-2 ${look}`}>
      <select id={id} aria-label={value} className="h-full w-full appearance-none bg-transparent pl-[5px] outline-none">
        <option>{value}</option>
      </select>
      <span className="pointer-events-none absolute right-2">
        <ThinChevron />
      </span>
    </span>
  );
}

function Chip({ children, label }: { children: ReactNode; label?: string }) {
  return (
    <button
      type="button"
      aria-label={label}
      className="flex h-[46px] min-w-11 items-center justify-center rounded border-2 border-[#b4b4b4] bg-[#f0f0f0]"
    >
      {children}
    </button>
  );
}

function PathChip({ text }: { text: string }) {
  return (
    <Chip>
      <span className="flex items-center gap-[18px] pl-[6px] pr-[6px]">
        {text}
        <Cross size={16} stroke={6} className="text-[#6e6e6e]" />
      </span>
    </Chip>
  );
}

const BOX = 'border-[#d2d2d2] border-b-[#b5b5b5] bg-[#fdfdfd]';
const CHECK_COLS = 'grid grid-cols-[222px_251px_232px_auto] pl-[109px]';

function FindBar() {
  return (
    <div className="flex h-[50px] shrink-0 items-center border-b-2 border-[#adadad] bg-[#e6e6e6] pl-1 pr-4">
      <button type="button" className="flex items-center">
        <svg width="32" height="32" viewBox="0 0 32 32">
          <path d="M2 1h13l3 4h11q2 0 2 2v20q0 2-2 2H2z" fill="#f5d28b" stroke="#c9964a" strokeWidth="2" />
          <circle cx="17" cy="15" r="8" fill="#e9eef0" stroke="#6f6f6f" strokeWidth="3.5" />
          <path d="M11 21l-7 9" stroke="#6f6f6f" strokeWidth="4" />
        </svg>
        <span className="ml-1 mr-2">
          <Txt>查找</Txt>
        </span>
        <BigCaret />
      </button>
      <span className="ml-[26px]">
        <Check label="高级模式(&A)" />
      </span>
      <button type="button" className="ml-[46px] flex items-center gap-[6px]">
        <Txt>预设</Txt>
        <BigCaret />
      </button>
      <button type="button" className="ml-[38px] flex items-center gap-[6px]">
        <svg width="30" height="28" viewBox="0 0 30 28">
          <path d="M7 8q10-7 17 1 5 8-2 14-5 4-11 1" fill="none" stroke="#3a75b5" strokeWidth="4.5" />
          <path d="M1 0v13h13z" fill="#3a75b5" />
        </svg>
        <Txt>复位(R)</Txt>
        <BigCaret />
      </button>
      <div className="ml-auto flex items-center gap-8">
        <button type="button" aria-label="折叠">
          <svg width="18" height="18" viewBox="0 0 18 18">
            <path d="M2 1l7 6 7-6M2 10l7 6 7-6" fill="none" stroke="#000" strokeWidth="2.6" />
          </svg>
        </button>
        <button type="button" aria-label="关闭查找面板">
          <Cross size={19} stroke={3.6} />
        </button>
      </div>
    </div>
  );
}

function FindLeft() {
  return (
    <div className="pl-[14px] pr-[17px] pt-[13px]">
      <div className="flex items-center">
        <label htmlFor="name" className="w-[109px]">
          <Txt>名称(L):</Txt>
        </label>
        <div className="flex h-[50px] flex-1 items-center border-2 border-[#a0a0a0] bg-white pl-3 pr-2">
          <svg width="22" height="22" viewBox="0 0 22 22" fill="none" stroke="#000" strokeWidth="2.5">
            <path d="M7.5 2h6v6h-6zM1.5 14h6v6h-6zM14 14h6v6h-6z" />
          </svg>
          <input id="name" type="text" className="h-full flex-1 bg-transparent outline-none" />
          <ThinChevron />
        </div>
      </div>
      <div className={`mt-[6px] ${CHECK_COLS} auto-rows-[48px]`}>
        <Check label="通配符(&M)" checked />
        <Check label="任意字符(N)" />
        <Check label="区分大小写(&O)" />
        <span />
        <Check label="正则表达式(&P)" />
        <Check label="忽略变音标记(Q)" />
        <Check label="部分匹配(&R)" checked />
      </div>
      <div className="relative mt-[9px] flex items-center">
        <label htmlFor="text" className="w-[109px] font-bold">
          <Txt>文本(S):</Txt>
        </label>
        <div className="relative flex h-[50px] flex-1 items-center border-2 border-[#2b8bd8] bg-white pl-[6px] pr-2">
          <input id="text" type="text" defaultValue="vulkan" className="h-full flex-1 bg-transparent outline-none" />
          <span className="absolute left-[81px] h-8 w-[2px] bg-black" />
          <ThinChevron />
        </div>
        <div className="pointer-events-none absolute -left-[9px] -top-4 h-[78px] w-[262px] rounded-lg border-[7px] border-[#37bd4c]" />
        <span className="pointer-events-none absolute -top-[9px] left-[309px] text-[32px] leading-8 text-[#37bd4c]">1</span>
      </div>
      <div className={`mt-[9px] ${CHECK_COLS} auto-rows-[46px]`}>
        <Check label="通配符(&U)" />
        <Check label="任意字符(&V)" />
        <Check label="区分大小写(&W)" />
        <Check label="按UTF8查找(&Y)" checked />
        <Check label="正则表达式(&Z)" />
        <Check label="忽略变音标记(&0)" />
        <Check label="部分匹配(&1)" checked />
      </div>
      <div className="mt-3 flex flex-col gap-[14px]">
        <div className="flex items-center">
          <label htmlFor="type" className="w-[109px]">
            <Txt>类型(2):</Txt>
          </label>
          <Select id="type" value="所有文件与文件夹" look={`h-[50px] w-64 ${BOX}`} />
          <div className="ml-4 flex h-[50px] flex-1 items-center justify-end border border-[#ececec] bg-[#f9f9f9] pr-[9px]">
            <ThinChevron className="text-[#c0c0c0]" />
          </div>
        </div>
        {[
          ['date', '日期(3):'],
          ['time', '时间(4):'],
          ['size', '大小(5):'],
        ].map(([id, text]) => (
          <div key={id} className="flex items-center">
            <label htmlFor={id} className="w-[109px]">
              <Txt>{text}</Txt>
            </label>
            <Select id={id} value="忽略" look={`h-[50px] w-64 ${BOX}`} />
          </div>
        ))}
      </div>
    </div>
  );
}

function FindRight() {
  return (
    <div className="grid auto-rows-min grid-cols-[191px_1fr] content-start pl-[14px] pr-[9px]">
      <button type="button" className="ml-[5px] flex h-[50px] items-center gap-1">
        <Txt>查找范围(B):</Txt>
        <Caret className="text-black" />
      </button>
      <div className="flex h-[116px] items-start gap-1 border-2 border-[#98a0a8] bg-white p-1">
        <Chip label="阻止文件夹">
          <BlockedFolder />
        </Chip>
        <Chip label="链接">
          <svg width="24" height="34" viewBox="0 0 24 34" fill="none">
            <rect x="3" y="2" width="18" height="30" rx="9" stroke="#808080" strokeWidth="3" />
            <rect x="8.5" y="7" width="7" height="11" rx="3.5" stroke="#808080" strokeWidth="2.5" />
            <rect x="8.5" y="16" width="7" height="11" rx="3.5" stroke="#808080" strokeWidth="2.5" />
          </svg>
        </Chip>
        <PathChip text="D:\github\imgui" />
        <Chip label="添加">
          <Plus size={16} />
        </Chip>
      </div>

      <div className="col-start-2 mt-[9px] grid auto-rows-[46px] grid-cols-[252px_auto]">
        <Check label="搜索子文件夹(&D)" checked />
        <Check label="搜索压缩文件(&E)" />
        <Check label="禁止显示 UAC 提示(&F)" checked />
      </div>

      <button type="button" className="ml-[5px] mt-[9px] flex h-[50px] items-center gap-1">
        <Txt>排除(G):</Txt>
        <Caret className="text-black" />
      </button>
      <div className="mt-[9px] flex h-[116px] items-start gap-1 border-2 border-[#98a0a8] bg-white p-1">
        <Chip label="阻止文件夹">
          <BlockedFolder />
        </Chip>
        <Chip label="过滤器">
          <svg width="32" height="32" viewBox="0 0 32 32">
            <circle cx="16" cy="16" r="13" fill="none" stroke="#858585" strokeWidth="5" strokeDasharray="5.1 5.1" />
            <circle cx="16" cy="16" r="8" fill="#f0f0f0" stroke="#9a9a9a" strokeWidth="6" />
          </svg>
        </Chip>
        <PathChip text="$Recycle.Bin\*" />
        <PathChip text="System Volume Information\*" />
        <Chip label="添加">
          <Plus size={16} />
        </Chip>
      </div>

      <label htmlFor="index" className="mt-2 flex h-[50px] items-center">
        <Txt>索引搜索</Txt>
      </label>
      <div className="relative mt-2 flex h-[50px] items-center border-b-2 border-[#a0a0a0] bg-[#fdfdfd] pl-2 pr-[10px]">
        <SearchGlass />
        <input
          id="index"
          type="text"
          placeholder="输入 Everything 查找查询以缩小查找目标的范围"
          className="ml-3 h-full flex-1 bg-transparent outline-none placeholder:italic placeholder:text-[#7a7a7a]"
        />
        <ThinChevron />
        <span className="pointer-events-none absolute -left-[22px] top-2 text-[32px] leading-8 text-[#37bd4c]">2</span>
      </div>

      <label htmlFor="output" className="mt-[10px] flex h-12 items-center">
        <Txt>显示结果于(&I):</Txt>
      </label>
      <div className="relative mt-[10px] flex h-12 gap-1">
        <Select id="output" value="右侧(新标签页)" look={`w-[229px] ${BOX}`} />
        <Select id="target" value="查找结果" look="flex-1 border-[#8d9196] bg-white" />
        <div className="pointer-events-none absolute -left-5 -top-[10px] h-[62px] w-[249px] rounded-lg border-[7px] border-[#37bd4c]" />
      </div>

      <div className="col-start-2 mt-3 flex h-10 items-center">
        <Check label="清除上次的搜索结果(&J)" checked />
      </div>

      <div className="relative col-span-2 mt-4 flex justify-end gap-[18px] pb-3">
        <button type="button" className="h-14 w-[172px] rounded-md border-2 border-[#d0d0d0] bg-[#fdfdfd]">
          <Txt>改进(&K)</Txt>
        </button>
        <button type="button" className="h-14 w-[172px] rounded-md border-2 border-[#0f78d4] bg-[#fdfdfd]">
          <Txt>查找</Txt>
        </button>
        <div className="pointer-events-none absolute -right-[9px] -top-6 bottom-0 w-[194px] rounded-xl border-8 border-[#37bd4c]" />
        <span className="pointer-events-none absolute -top-[64px] right-[168px] text-[32px] leading-8 text-[#37bd4c]">3</span>
        <span className="pointer-events-none absolute -right-[9px] -top-1 whitespace-nowrap font-['Roboto',sans-serif] text-[52px] font-light leading-[56px] text-white/70 [text-shadow:1px_1px_1px_#888,-1px_0_1px_#aaa]">
          CSDN @baiyu33
        </span>
      </div>
    </div>
  );
}

export default function App() {
  return (
    <div className="flex h-screen w-full flex-col overflow-hidden border-r-[3px] border-[#3c3d40] bg-[#f5f6f8] font-['Open_Sans','Noto_Sans_CJK_SC',sans-serif] text-2xl leading-8 text-black">
      <TitleBar />
      <MenuBar />
      <ToolBar />
      <FavoritesBar />
      <main className="grid min-h-0 flex-1 grid-cols-[442px_1108fr_1115fr] grid-rows-[minmax(0,1fr)] gap-2 bg-[#e7e7e7]">
        <FolderTree />
        <LeftLister />
        <RightLister />
      </main>
      <section className="shrink-0 bg-[#f0f0f0]">
        <FindBar />
        <form className="grid grid-cols-[1346fr_1335fr]">
          <FindLeft />
          <div className="pt-[13px]">
            <div className="border-l-2 border-[#cfcfcf]">
              <FindRight />
            </div>
          </div>
        </form>
      </section>
    </div>
  );
}
